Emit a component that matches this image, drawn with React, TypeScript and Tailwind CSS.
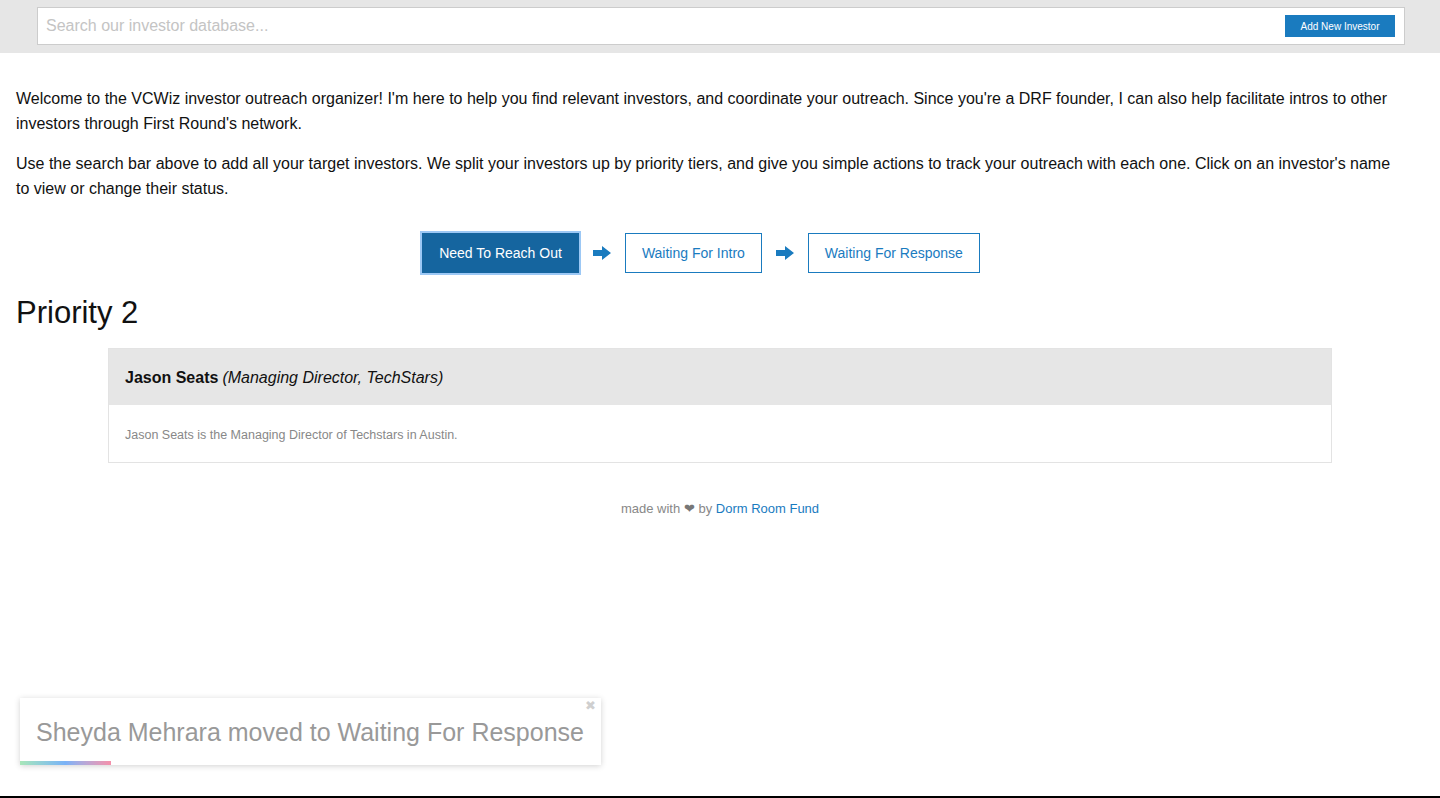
import { useState } from 'react'

const font = { fontFamily: '"Liberation Sans", Arial, sans-serif' }

const stages = ['Need To Reach Out', 'Waiting For Intro', 'Waiting For Response']

function Arrow() {
  return (
    <svg width="18" height="14" viewBox="0 0 18 14" className="mx-[14px]">
      <path d="M0 4h9V0l9 7-9 7v-4H0z" fill="#1a7bbf" />
    </svg>
  )
}

export default function App() {
  const [active, setActive] = useState(0)
  const [toast, setToast] = useState(true)

  return (
    <div className="relative h-[798px] w-[1440px] overflow-hidden bg-white text-[#111]" style={font}>
      <div className="bg-[#e6e6e6] pt-[7px] pb-[8px] pl-[37px] pr-[35px]">
        <div className="flex h-[38px] items-center border border-[#cccccc] bg-white pl-[8px] pr-[9px]">
          <input
            placeholder="Search our investor database..."
            className="flex-1 bg-transparent text-[16px] text-[#333] outline-none placeholder:text-[#c4c4c4]"
          />
          <button className="h-[22px] w-[110px] bg-[#1a7bbf] text-[10px] text-white">Add New Investor</button>
        </div>
      </div>

      <div className="px-[16px] pt-[33px]">
        <div className="pr-[18px]">
          <p className="text-[16px] leading-[25px]">
            Welcome to the VCWiz investor outreach organizer! I'm here to help you find relevant investors, and coordinate your outreach. Since you're a DRF founder, I can also help facilitate intros to other investors through First Round's network.
          </p>
          <p className="mt-[15px] text-[16px] leading-[25px]">
            Use the search bar above to add all your target investors. We split your investors up by priority tiers, and give you simple actions to track your outreach with each one. Click on an investor's name to view or change their status.
          </p>
        </div>

        <div className="mt-[32px] flex items-center justify-center pr-[38px]">
          {stages.map((s, i) => (
            <div key={s} className="flex items-center">
              {i > 0 && <Arrow />}
              <button
                onClick={() => setActive(i)}
                className={
                  i === active
                    ? 'h-[40px] border border-[#15659f] bg-[#15659f] px-[16px] text-[14px] text-white shadow-[0_0_0_2px_#9cc8f5]'
                    : 'h-[40px] border border-[#1a7bbf] bg-white px-[16px] text-[14px] text-[#1a7bbf]'
                }
              >
                {s}
              </button>
            </div>
          ))}
        </div>

        <h2 className="mt-[20px] text-[31px] leading-[40px]">Priority 2</h2>

        <div className="mx-[92px] mt-[15px] border border-[#e3e3e3]">
          <div className="flex h-[56px] items-center bg-[#e6e6e6] px-[16px] pt-[1px] text-[16px]">
            <span className="font-bold">Jason Seats</span>
            <span className="ml-[4px] italic">(Managing Director, TechStars)</span>
          </div>
          <div className="flex h-[57px] items-center px-[16px] pt-[3px] text-[12.5px] text-[#888]">
            Jason Seats is the Managing Director of Techstars in Austin.
          </div>
        </div>

        <div className="mt-[36px] text-center text-[13px] text-[#888]">
          made with <span className="text-[#777]">&#10084;</span> by <a className="text-[#1a7bbf]">Dorm Room Fund</a>
        </div>
      </div>

      {toast && (
        <div className="absolute left-[20px] top-[698px] h-[67px] w-[581px] bg-white shadow-[0_1px_6px_rgba(0,0,0,0.18)]">
          <button
            onClick={() => setToast(false)}
            className="absolute right-[5px] top-[0px] text-[13px] leading-[16px] text-[#cfcfcf]"
          >
            &#10006;
          </button>
          <div className="whitespace-nowrap pl-[16px] pt-[19px] text-[25px] leading-[30px] text-[#999]">
            Sheyda Mehrara moved to Waiting For Response
          </div>
          <div className="absolute bottom-0 left-0 h-[4px] w-[91px] bg-gradient-to-r from-[#a8e6b8] via-[#7ab2f7] to-[#f590aa]" />
        </div>
      )}

      <div className="absolute bottom-0 left-0 h-[2px] w-full bg-black" />
    </div>
  )
}
